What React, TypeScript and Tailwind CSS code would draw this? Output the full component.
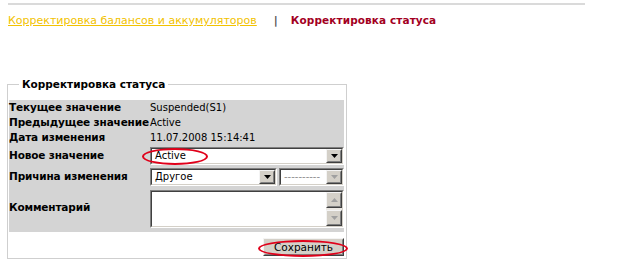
import React from "react";

const font = "font-['DejaVu_Sans',sans-serif]";

const DownArrow = ({ grey }: { grey?: boolean }) => (
  <svg width="7" height="4" viewBox="0 0 7 4">
    <path d="M0 0h7L3.5 4z" fill={grey ? "#a0a0a0" : "#000"} />
  </svg>
);

const UpArrow = () => (
  <svg width="7" height="4" viewBox="0 0 7 4">
    <path d="M0 4h7L3.5 0z" fill="#a0a0a0" />
  </svg>
);

// classic raised 3d button face
function Raised({ children, className }: { children?: React.ReactNode; className: string }) {
  return (
    <div className={`border border-t-[#f4f4f4] border-l-[#f4f4f4] border-b-[#404040] border-r-[#404040] ${className}`}>
      <div className="flex h-full w-full items-center justify-center border border-t-[#d4d0c8] border-l-[#d4d0c8] border-b-[#808080] border-r-[#808080] bg-[#d4d0c8]">
        {children}
      </div>
    </div>
  );
}

function Sunken({ children, className }: { children?: React.ReactNode; className: string }) {
  return (
    <div className={`border border-t-[#808080] border-l-[#808080] border-b-white border-r-white ${className}`}>
      <div className="flex h-full w-full border border-t-[#404040] border-l-[#404040] border-b-[#d4d0c8] border-r-[#d4d0c8] bg-white">
        {children}
      </div>
    </div>
  );
}

function Select({ text, className, disabled }: { text: string; className: string; disabled?: boolean }) {
  return (
    <Sunken className={className}>
      <span className={`flex-1 truncate pl-[3px] text-[10px] leading-[14px] ${disabled ? "text-[#909090]" : "text-black"}`}>
        {text}
      </span>
      <Raised className="h-full w-[16px]">
        <DownArrow grey={disabled} />
      </Raised>
    </Sunken>
  );
}

const rows = [
  ["Текущее значение", "Suspended(S1)"],
  ["Предыдущее значение", "Active"],
  ["Дата изменения", "11.07.2008 15:14:41"],
];

const label = "text-[10.5px] font-bold tracking-[-0.15px] whitespace-nowrap";

export default function App() {
  return (
    <div className={`${font} relative w-[641px] h-[267px] bg-white pl-[8px] pt-[3px] text-black`}>
      <div className="w-[577px] border-t-2 border-[#dadada]" />

      <div className="mt-[8px] flex items-baseline text-[11px] leading-[14px]">
        <a href="#" className="text-[#f2c200] underline decoration-[#f2c200]">
          Корректировка балансов и аккумуляторов
        </a>
        <span className="ml-[17px] mr-[13px] font-bold text-[#555]">|</span>
        <span className="text-[10.5px] font-bold tracking-[0.1px] text-[#a3001f]">Корректировка статуса</span>
      </div>

      <fieldset className="mt-[49px] ml-[-1px] w-[340px] border border-[#cfcfcf] pl-[1px] pr-[2px] pb-[2px]">
        <legend className="ml-[10px] px-[3px] text-[10.5px] font-bold leading-[14px]">
          Корректировка статуса
        </legend>

        <div className="mt-[9px] grid grid-cols-[141px_194px] bg-[#d4d4d4] pb-[4px]">
          {rows.map(([name, value]) => (
            <React.Fragment key={name}>
              <div className={`h-[15px] leading-[15px] ${label}`}>{name}</div>
              <div className="h-[15px] text-[10px] leading-[15px]">{value}</div>
            </React.Fragment>
          ))}

          <div className={`flex h-[21px] items-center ${label}`}>Новое значение</div>
          <div className="flex h-[21px] items-center">
            <Select text="Active" className="h-[18px] w-[194px]" />
          </div>

          <div className={`flex h-[21px] items-center ${label}`}>Причина изменения</div>
          <div className="flex h-[21px] items-center gap-[2px]">
            <Select text="Другое" className="h-[18px] w-[127px]" />
            <Select text="----------" className="h-[18px] w-[65px]" disabled />
          </div>

          <div className={`flex h-[41px] items-center ${label}`}>Комментарий</div>
          <div className="flex h-[41px] items-end">
            <Sunken className="h-[38px] w-[194px]">
              <div className="flex-1" />
              <div className="flex w-[16px] flex-col bg-[#ece9e4]">
                <Raised className="h-[16px] w-[16px]">
                  <UpArrow />
                </Raised>
                <div className="flex-1" />
                <Raised className="h-[16px] w-[16px]">
                  <DownArrow grey />
                </Raised>
              </div>
            </Sunken>
          </div>
        </div>

        <div className="mt-[6px] flex justify-end">
          <Raised className="h-[18px] w-[81px]">
            <span className="text-[10.5px] leading-[14px]">Сохранить</span>
          </Raised>
        </div>
      </fieldset>

      {/* red marker ellipses drawn over the form */}
      <div className="absolute left-[142px] top-[148px] h-[17px] w-[66px] rounded-[50%] border-2 border-[#e0001a]" />
      <div className="absolute left-[258px] top-[240px] h-[17px] w-[90px] rounded-[50%] border-2 border-[#e0001a]" />
    </div>
  );
}
